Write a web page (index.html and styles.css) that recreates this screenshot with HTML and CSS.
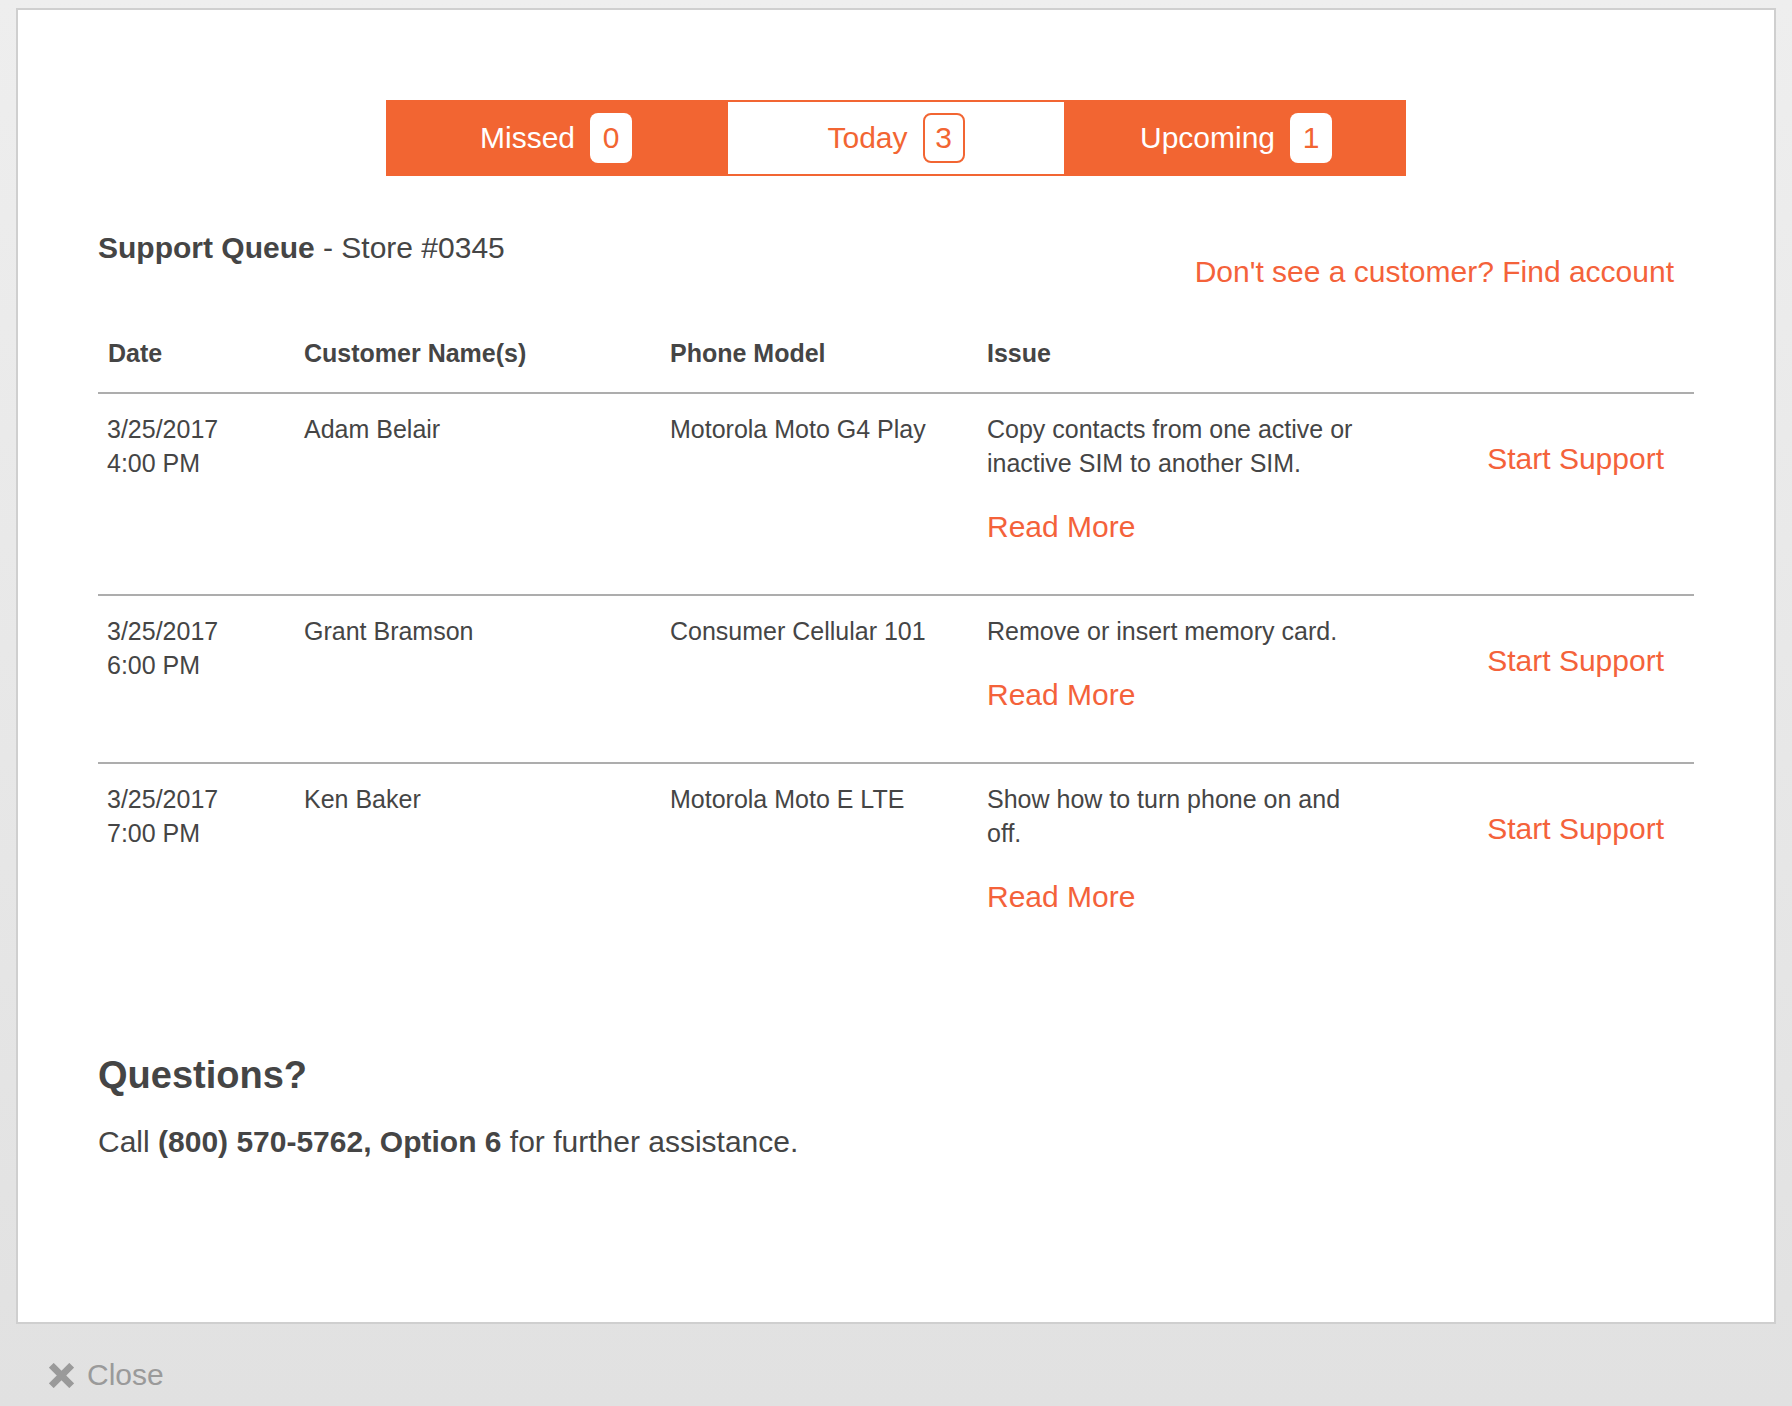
FILE: index.html
```html
<!DOCTYPE html>
<html lang="en">
<head>
<meta charset="utf-8">
<title>Support Queue</title>
<link rel="stylesheet" href="styles.css">
</head>
<body>
<div class="panel">
  <div class="tabs">
    <div class="tab">Missed <span class="badge">0</span></div>
    <div class="tab active">Today <span class="badge">3</span></div>
    <div class="tab">Upcoming <span class="badge">1</span></div>
  </div>

  <div class="queue-head">
    <h1 class="title"><strong>Support Queue</strong> - Store #0345</h1>
    <a class="link find" href="#">Don't see a customer? Find account</a>
  </div>

  <div class="table">
    <div class="row head">
      <div class="cell">Date</div>
      <div class="cell">Customer Name(s)</div>
      <div class="cell">Phone Model</div>
      <div class="cell">Issue</div>
      <div class="cell"></div>
    </div>
    <div class="row">
      <div class="cell">3/25/2017<br>4:00 PM</div>
      <div class="cell">Adam Belair</div>
      <div class="cell">Motorola Moto G4 Play</div>
      <div class="cell">Copy contacts from one active or inactive SIM to another SIM.<a class="link more" href="#">Read More</a></div>
      <div class="cell action"><a class="link" href="#">Start Support</a></div>
    </div>
    <div class="row">
      <div class="cell">3/25/2017<br>6:00 PM</div>
      <div class="cell">Grant Bramson</div>
      <div class="cell">Consumer Cellular 101</div>
      <div class="cell">Remove or insert memory card.<a class="link more" href="#">Read More</a></div>
      <div class="cell action"><a class="link" href="#">Start Support</a></div>
    </div>
    <div class="row last">
      <div class="cell">3/25/2017<br>7:00 PM</div>
      <div class="cell">Ken Baker</div>
      <div class="cell">Motorola Moto E LTE</div>
      <div class="cell">Show how to turn phone on and off.<a class="link more" href="#">Read More</a></div>
      <div class="cell action"><a class="link" href="#">Start Support</a></div>
    </div>
  </div>

  <h2 class="questions">Questions?</h2>
  <p class="call">Call <strong>(800) 570-5762, Option 6</strong> for further assistance.</p>
</div>

<div class="close">
  <svg class="close-icon" width="25" height="25" viewBox="0 0 24 24" aria-hidden="true">
    <path d="M4.5 4.5 L19.5 19.5 M19.5 4.5 L4.5 19.5" stroke="#9a9a9a" stroke-width="6.5" stroke-linecap="square" fill="none"/>
  </svg>
  <span>Close</span>
</div>
</body>
</html>
```

FILE: styles.css
```css
html, body {
  margin: 0;
  padding: 0;
}

body {
  font-family: "Liberation Sans", Arial, Helvetica, sans-serif;
  color: #454545;
  background: linear-gradient(#eeeeee, #e1e1e1);
  min-height: 1406px;
  box-sizing: border-box;
  padding-top: 8px;
}

.panel {
  margin: 0 16px;
  background: #ffffff;
  border: 2px solid #cfcfcf;
  padding: 90px 80px 160px;
}

/* Tabs */
.tabs {
  display: flex;
  width: 1020px;
  margin: 0 auto;
  background: #f26532;
}

.tab {
  width: 340px;
  height: 76px;
  box-sizing: border-box;
  display: flex;
  align-items: center;
  justify-content: center;
  gap: 15px;
  font-size: 30px;
  color: #ffffff;
}

.tab.active {
  background: #ffffff;
  color: #f26532;
  border: 2px solid #f26532;
}

.badge {
  width: 42px;
  height: 50px;
  box-sizing: border-box;
  border-radius: 8px;
  background: #ffffff;
  color: #f26532;
  display: flex;
  align-items: center;
  justify-content: center;
  font-size: 30px;
}

.tab.active .badge {
  border: 2px solid #f26532;
}

/* Heading row */
.queue-head {
  display: flex;
  justify-content: space-between;
  align-items: flex-start;
  margin-top: 52px;
}

.title {
  margin: 0;
  font-size: 30px;
  font-weight: normal;
  line-height: 40px;
}

.link {
  color: #f4623a;
  text-decoration: none;
  font-size: 30px;
  line-height: 34px;
}

.find {
  margin-top: 24px;
  margin-right: 20px;
  line-height: 40px;
}

/* Table */
.table {
  margin-top: 44px;
}

.row {
  display: grid;
  grid-template-columns: 197px 366px 317px 389px 1fr;
  font-size: 25px;
  line-height: 34px;
  border-bottom: 2px solid #adadad;
  padding: 18px 0 50px;
}

.row.head {
  font-weight: bold;
  padding: 0 0 22px;
}

.row.last {
  border-bottom: none;
}

.cell {
  padding-left: 9px;
}

.row.head .cell:first-child {
  padding-left: 10px;
}

.more {
  display: block;
  margin-top: 30px;
}

.action {
  text-align: right;
  padding-right: 30px;
  padding-top: 30px;
}

/* Questions */
.questions {
  margin: 88px 0 0;
  font-size: 38px;
  line-height: 46px;
  font-weight: bold;
}

.call {
  margin: 24px 0 0;
  font-size: 30px;
  line-height: 40px;
}

/* Close */
.close {
  display: flex;
  align-items: center;
  gap: 13px;
  margin: 31px 0 0 49px;
  font-size: 30px;
  line-height: 40px;
  color: #9a9a9a;
}

.close-icon {
  display: block;
}
```
